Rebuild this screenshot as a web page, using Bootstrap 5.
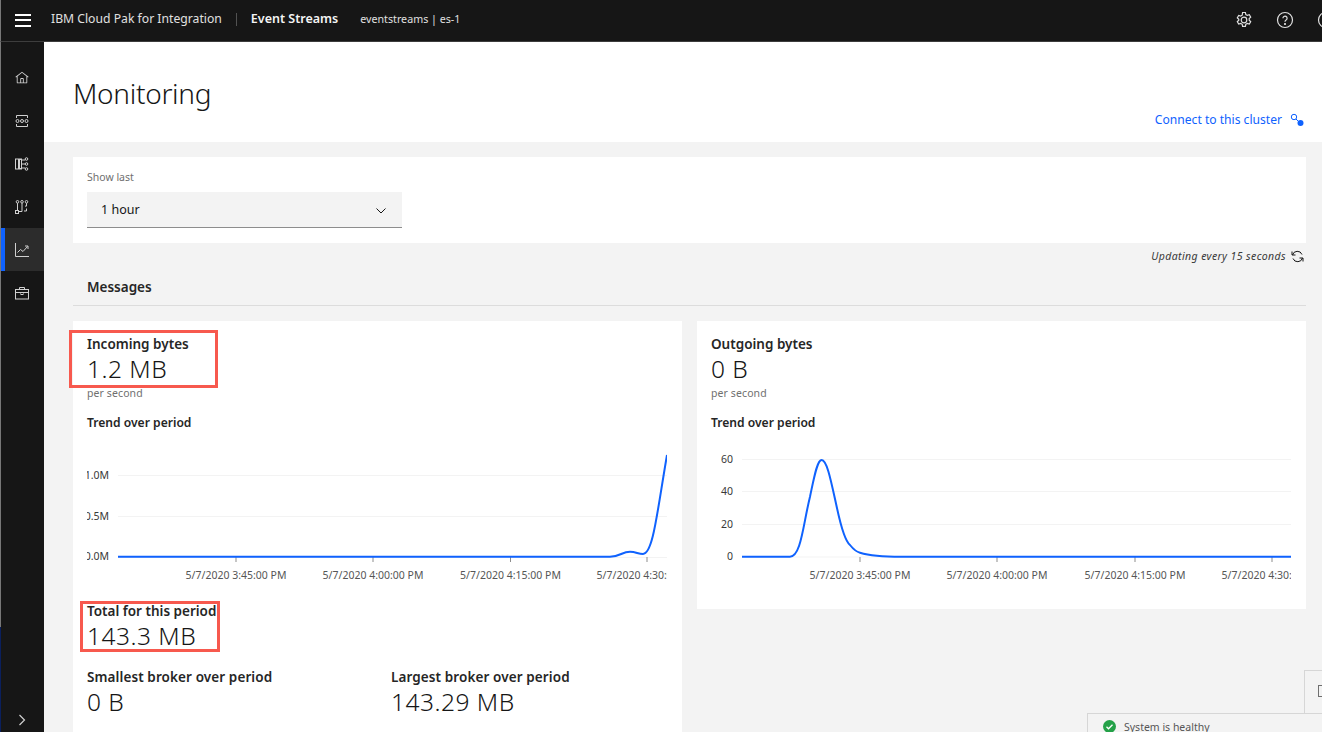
<!DOCTYPE html>
<html lang="en">

<head>
  <meta charset="UTF-8">
  <meta name="viewport" content="width=device-width, initial-scale=1.0">
  <title>Monitoring</title>
  <link href="https://cdn.jsdelivr.net/npm/bootstrap@5.3.0/dist/css/bootstrap.min.css" rel="stylesheet">
  <style>
    html, body { height: 732px; overflow: hidden; }
    body { font-family: "Noto Sans", "Liberation Sans", sans-serif; color: #161616; background: #f3f3f3; position: relative; }
    .top-bar { height: 42px; background: #161616; border-bottom: 1px solid #3d3d3d; border-left: 1px solid #777; color: #f4f4f4; padding: 0 0 2px 14px; }
    .burger { width: 16px; height: 13px; border-top: 2px solid #fff; border-bottom: 2px solid #fff; position: relative; margin-top: 1px; }
    .burger::after { content: ""; position: absolute; left: 0; right: 0; top: 3.5px; height: 2px; background: #fff; }
    .brand-name { font-size: 12.2px; margin-left: 20px; color: #e0e0e0; }
    .brand-sep { width: 1px; height: 13px; background: #525252; margin: 0 14px; }
    .brand-product { font-size: 12.5px; font-weight: 600; color: #f4f4f4; }
    .brand-inst { font-size: 10.7px; margin-left: 22px; color: #e0e0e0; }
    .top-icons { gap: 23px; margin-right: -13px; margin-top: 1px; }
    .edge-strip { width: 1px; background: linear-gradient(#777 0, #777 585px, #0a1f5c 585px); }
    .side-rail { width: 43px; background: #161616; padding-top: 14px; height: 690px; position: relative; }
    .rail-item { height: 43px; color: #d0d0d0; border-left: 4px solid transparent; padding-right: 5px; }
    .rail-item.on { background: #2c2c2c; border-left-color: #0f62fe; }
    .rail-toggle { position: absolute; left: 0; right: 1px; bottom: 0; height: 24px; }
    .page-head { height: 100px; background: #fff; padding: 29px 16px 0 29px; }
    .page-title { font-size: 28px; font-weight: 300; letter-spacing: -.3px; margin: 0; line-height: 44px; }
    .connect-link { color: #0f62fe; font-size: 12.1px; text-decoration: none; margin: 37px 2px 0 0; gap: 8px; height: 24px; }
    .page-body { padding: 15px 16px 0 29px; }
    .filter-box { background: #fff; height: 86px; padding: 13px 14px; }
    .filter-label { font-size: 10.5px; color: #6f6f6f; line-height: 14px; margin-bottom: 8px; }
    .range-select { width: 315px; height: 36px; background: #f3f3f3; border-bottom: 1px solid #8d8d8d; padding: 2px 16px 0 14px; font-size: 12.5px; }
    .update-note { font-size: 10.5px; font-style: italic; color: #393939; height: 27px; gap: 5px; letter-spacing: .4px; padding-right: 2px; }
    .section-name { font-size: 13.5px; font-weight: 600; padding: 7px 14px 0; height: 36px; border-bottom: 1px solid #dcdcdc; margin-bottom: 15px; color: #262626; }
    .metric-grid { display: grid; grid-template-columns: 609px 609px; gap: 15px; align-items: start; }
    .metric-box { background: #fff; padding: 14px 14px 0; }
    .metric-name { font-size: 13.5px; font-weight: 600; line-height: 18px; color: #262626; }
    .metric-value { font-size: 24.5px; font-weight: 300; line-height: 32px; letter-spacing: .5px; }
    .metric-unit { font-size: 10.5px; color: #6f6f6f; line-height: 14px; margin-top: 1px; letter-spacing: .1px; }
    .trend-name { font-size: 12.1px; font-weight: 600; line-height: 18px; margin-top: 14px; color: #262626; }
    .trend-chart { display: block; width: 580px; height: 140px; margin-top: 13px; }
    .trend-chart text { font-size: 10.5px; font-family: "Noto Sans", "Liberation Sans", sans-serif; fill: #565656; }
    .trend-chart .axis-y { fill: #393939; }
    .brokers { display: grid; grid-template-columns: 304px 1fr; margin-top: 16px; padding-bottom: 40px; }
    .brokers .metric-name { letter-spacing: .1px; }
    .total-block { margin-top: 17px; }
    .callout { position: absolute; border: 3px solid #f7594e; pointer-events: none; }
    .callout-a { left: 69px; top: 330px; width: 149px; height: 58px; }
    .callout-b { left: 80px; top: 601px; width: 140px; height: 51px; }
    .health-bar { position: absolute; left: 1087px; top: 713px; width: 240px; height: 30px; background: #f3f3f3; border: 1px solid #d6d6d6; font-size: 10.5px; color: #565656; padding: 6px 0 0 15px; gap: 8px; }
    .side-tab { position: absolute; left: 1304px; top: 670px; width: 30px; height: 44px; background: #f3f3f3; border: 1px solid #d6d6d6; padding: 14px 0 0 13px; }
  </style>
</head>

<body>
  <header class="top-bar d-flex align-items-center">
    <div class="burger"></div>
    <span class="brand-name">IBM Cloud Pak for Integration</span>
    <span class="brand-sep"></span>
    <span class="brand-product">Event Streams</span>
    <span class="brand-inst">eventstreams | es-1</span>
    <div class="top-icons d-flex align-items-center ms-auto">
      <svg width="18" height="18" viewBox="0 0 18 18" fill="none" stroke="#e0e0e0" stroke-width="1.2">
        <circle cx="9" cy="9" r="2.8"/>
        <path d="M7.6 1.5h2.8l.4 2 1.5.9 2-.7 1.4 2.4-1.5 1.4v1.8l1.5 1.4-1.4 2.4-2-.7-1.5.9-.4 2H7.600l-.4-2-1.500-.9-2 .7-1.400-2.400 1.500-1.400V8.200L2.300 6.800l1.400-2.400 2 .7 1.500-.9z"/>
      </svg>
      <svg width="18" height="18" viewBox="0 0 18 18" fill="none" stroke="#e0e0e0" stroke-width="1.200">
        <circle cx="9" cy="9" r="7.500"/>
        <path d="M6.900 7.200a2.100 2.100 0 1 1 3.200 1.800c-.8.500-1.100.9-1.100 1.800"/>
        <circle cx="9" cy="13" r=".5" fill="#e0e0e0"/>
      </svg>
      <svg width="18" height="18" viewBox="0 0 18 18" fill="none" stroke="#e0e0e0" stroke-width="1.200">
        <circle cx="9" cy="9" r="7.500"/>
      </svg>
    </div>
  </header>

  <div class="d-flex">
    <div class="edge-strip"></div>
    <nav class="side-rail">
      <div class="rail-item d-flex align-items-center justify-content-center">
        <svg width="14" height="14" viewBox="0 0 32 32" fill="currentColor"><path d="M16.612 2.214a1.010 1.010 0 0 0-1.242 0L1 13.419l1.243 1.572L4 13.621V26a2.004 2.004 0 0 0 2 2h20a2.004 2.004 0 0 0 2-2V13.630L29.757 15 31 13.428ZM18 26h-4v-8h4Zm2 0v-8a2.002 2.002 0 0 0-2-2h-4a2.002 2.002 0 0 0-2 2v8H6V12.062l10-7.790 10 7.800V26Z"/></svg>
      </div>
      <div class="rail-item d-flex align-items-center justify-content-center">
        <svg width="14" height="14" viewBox="0 0 14 14" fill="none" stroke="currentColor"><path d="M1.500 4V1.500h11V4M1.500 10v2.500h11V10"/><circle cx="2.500" cy="7" r="1.500"/><circle cx="7" cy="7" r="1.500"/><circle cx="11.500" cy="7" r="1.500"/></svg>
      </div>
      <div class="rail-item d-flex align-items-center justify-content-center">
        <svg width="14" height="14" viewBox="0 0 14 14" fill="none" stroke="currentColor"><rect x=".5" y="2" width="3" height="10"/><rect x="4.500" y="2" width="2" height="10"/><circle cx="11.500" cy="2" r="1.300"/><circle cx="11.500" cy="7" r="1.300"/><circle cx="11.500" cy="12" r="1.300"/><path d="M6.500 7h3.700M6.500 3h3.700M6.500 11h3.700"/></svg>
      </div>
      <div class="rail-item d-flex align-items-center justify-content-center">
        <svg width="14" height="14" viewBox="0 0 14 14" fill="none" stroke="currentColor"><circle cx="2.500" cy="1.800" r="1.300"/><circle cx="7" cy="1.800" r="1.300"/><circle cx="11.500" cy="1.800" r="1.300"/><rect x=".5" y="10.500" width="3" height="3"/><path d="M2.500 3.100v7.400M7 3.100v8.400H3.500M11.500 3.100v3h-1.500M11.500 8.500v2.500H9"/></svg>
      </div>
      <div class="rail-item on d-flex align-items-center justify-content-center">
        <svg width="14" height="14" viewBox="0 0 14 14" fill="none" stroke="currentColor"><path d="M.5 0v13.500H14"/><path d="M2.500 9.500l3-3 2.500 2 4.500-5M10 3h3v3"/></svg>
      </div>
      <div class="rail-item d-flex align-items-center justify-content-center">
        <svg width="14" height="14" viewBox="0 0 14 14" fill="none" stroke="currentColor"><rect x=".5" y="3.500" width="13" height="9.500"/><path d="M4.500 3.500V1.500h5v2M.5 6.500h13"/><rect x="6" y="6.500" width="2" height="2"/></svg>
      </div>
      <div class="rail-toggle d-flex align-items-center justify-content-center">
        <svg width="8" height="12" viewBox="0 0 8 12" fill="none" stroke="#d0d0d0" stroke-width="1.200"><path d="M1.500 1l5 5-5 5"/></svg>
      </div>
    </nav>

    <main class="flex-grow-1">
      <div class="page-head d-flex justify-content-between align-items-start">
        <h1 class="page-title">Monitoring</h1>
        <a class="connect-link d-flex align-items-center" href="#">Connect to this cluster
          <svg width="14" height="14" viewBox="0 0 14 14" fill="none" stroke="#0f62fe"><circle cx="4" cy="4" r="2.700"/><path d="M6 6l3 3"/><circle cx="10.500" cy="10" r="3" fill="#0f62fe" stroke="none"/></svg>
        </a>
      </div>

      <div class="page-body">
        <section class="filter-box">
          <div class="filter-label">Show last</div>
          <div class="range-select d-flex align-items-center justify-content-between">
            <span>1 hour</span>
            <svg width="10" height="6" viewBox="0 0 10 6" fill="none" stroke="#161616"><path d="M.5.5L5 5 9.500.5"/></svg>
          </div>
        </section>

        <div class="update-note d-flex align-items-center justify-content-end">
          <span>Updating every 15 seconds</span>
          <svg width="13" height="13" viewBox="0 0 13 13" fill="none" stroke="#161616"><path d="M1.500 5A5 5 0 0 1 11 4.500M11.500 8a5 5 0 0 1-9.500.5"/><path d="M1 1.500V5h3.500M12 11.500V8H8.500"/></svg>
        </div>

        <div class="section-name">Messages</div>

        <div class="metric-grid">
          <section class="metric-box">
            <div class="metric-name">Incoming bytes</div>
            <div class="metric-value">1.2 MB</div>
            <div class="metric-unit">per second</div>
            <div class="trend-name">Trend over period</div>
            <svg class="trend-chart" viewBox="0 0 580 140">
              <g stroke="#f3f3f3">
                <path d="M31 30.500H580M31 71.500H580M31 112.500H580"/>
              </g>
              <g stroke="#8d8d8d">
                <path d="M149 112v5M286 112v5M423.500 112v5M560 112v5"/>
              </g>
              <g class="axis-labels">
                <text class="axis-y" x="22" y="34" text-anchor="end">1.0M</text>
                <text class="axis-y" x="22" y="75" text-anchor="end">0.5M</text>
                <text class="axis-y" x="22" y="115" text-anchor="end">0.0M</text>
                <text x="149" y="134" text-anchor="middle">5/7/2020 3:45:00 PM</text>
                <text x="286" y="134" text-anchor="middle">5/7/2020 4:00:00 PM</text>
                <text x="423.500" y="134" text-anchor="middle">5/7/2020 4:15:00 PM</text>
                <text x="560" y="134" text-anchor="middle">5/7/2020 4:30:00 PM</text>
              </g>
              <path d="M31 111.700H523C533 111.700 535 106.700 543 106.700C549 106.700 551 109 556 109C566 109 570 68 580 10" fill="none" stroke="#0f62fe" stroke-width="2"/>
            </svg>
            <div class="total-block">
              <div class="metric-name">Total for this period</div>
              <div class="metric-value">143.3 MB</div>
            </div>
            <div class="brokers">
              <div>
                <div class="metric-name">Smallest broker over period</div>
                <div class="metric-value">0 B</div>
              </div>
              <div>
                <div class="metric-name">Largest broker over period</div>
                <div class="metric-value">143.29 MB</div>
              </div>
            </div>
          </section>

          <section class="metric-box">
            <div class="metric-name">Outgoing bytes</div>
            <div class="metric-value">0 B</div>
            <div class="metric-unit">per second</div>
            <div class="trend-name">Trend over period</div>
            <svg class="trend-chart mb-4" viewBox="0 0 580 140">
              <g stroke="#f3f3f3">
                <path d="M31 14.500H580M31 46.500H580M31 79.500H580M31 112H580"/>
              </g>
              <g stroke="#8d8d8d">
                <path d="M149 112v5M286 112v5M424 112v5M561 112v5"/>
              </g>
              <g class="axis-labels">
                <text class="axis-y" x="22" y="18" text-anchor="end">60</text>
                <text class="axis-y" x="22" y="50" text-anchor="end">40</text>
                <text class="axis-y" x="22" y="83" text-anchor="end">20</text>
                <text class="axis-y" x="22" y="115" text-anchor="end">0</text>
                <text x="149" y="134" text-anchor="middle">5/7/2020 3:45:00 PM</text>
                <text x="286" y="134" text-anchor="middle">5/7/2020 4:00:00 PM</text>
                <text x="424" y="134" text-anchor="middle">5/7/2020 4:15:00 PM</text>
                <text x="561" y="134" text-anchor="middle">5/7/2020 4:30:00 PM</text>
              </g>
              <path d="M31 111.700H79C90 111.700 92 80 99 51.700C103 33 106 15 110.700 15C116 15 120 36 125.700 61.700C130 82 134 96 139 100C143 105 146 107 149 107.700C160 111 175 111.700 190 111.700H580" fill="none" stroke="#0f62fe" stroke-width="2"/>
            </svg>
          </section>
        </div>
      </div>
    </main>
  </div>

  <div class="callout callout-a"></div>
  <div class="callout callout-b"></div>
  <div class="side-tab">
    <svg class="d-block" width="10" height="12" viewBox="0 0 10 12" fill="none" stroke="#6f6f6f"><rect x=".5" y=".5" width="9" height="11"/></svg>
  </div>
  <div class="health-bar d-flex align-items-start">
    <svg width="13" height="13" viewBox="0 0 13 13"><circle cx="6.500" cy="6.500" r="6.500" fill="#24a148"/><path d="M3.500 6.800l2 2 4-4" fill="none" stroke="#fff" stroke-width="1.300"/></svg>
    <span>System is healthy</span>
  </div>

  <script src="https://cdn.jsdelivr.net/npm/bootstrap@5.3.0/dist/js/bootstrap.bundle.min.js"></script>
</body>

</html>
